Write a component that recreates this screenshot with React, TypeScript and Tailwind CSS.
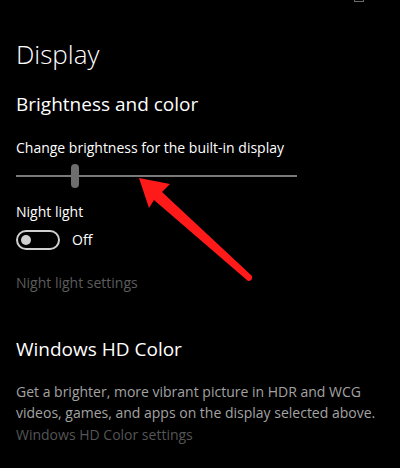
const Arrow = () => (
  <svg
    className="absolute left-0 top-0 pointer-events-none"
    width="400"
    height="468"
    viewBox="0 0 400 468"
  >
    <path
      d="M139 178 L170 184 L162 192 L252 276 Q253 281 248 281 L154 200 L149 208 Z"
      fill="#ff1a1a"
    />
  </svg>
);

const App = () => {
  return (
    <div
      className="relative w-[400px] h-[468px] overflow-hidden bg-black text-white"
      style={{ fontFamily: '"Open Sans", "Noto Sans", sans-serif' }}
    >
      <div className="absolute right-[36px] top-[-8px] h-[10px] w-[10px] border border-[#6a6a6a]" />

      <div className="px-4 pt-[36px]">
        <h1 className="text-[26px] leading-[36px] font-light">Display</h1>

        <h2 className="mt-[19px] text-[19px] leading-[26px]">Brightness and color</h2>

        <p className="mt-[21px] text-[14px] leading-[20px]">Change brightness for the built-in display</p>

        <div className="relative mt-[6px] h-[24px] w-[281px]">
          <div className="absolute left-0 right-0 top-[11px] h-[2px] bg-[#7a7a7a]" />
          <div className="absolute left-[55px] top-0 h-[24px] w-[8px] rounded-full bg-[#6e6e6e]" />
        </div>

        <p className="mt-[14px] text-[14px] leading-[20px]">Night light</p>

        <div className="mt-[8px] flex items-center gap-[12px]">
          <div className="flex h-[20px] w-[44px] items-center rounded-full border-2 border-[#cfcfcf] px-[3px]">
            <div className="h-[10px] w-[10px] rounded-full bg-[#cfcfcf]" />
          </div>
          <span className="text-[14px] leading-[20px]">Off</span>
        </div>

        <p className="mt-[23px] text-[14px] leading-[20px] text-[#5c5c5c]">Night light settings</p>

        <h2 className="mt-[43px] text-[19px] leading-[26px]">Windows HD Color</h2>

        <p className="mt-[19px] text-[14px] leading-[21px] text-[#a3a3a3]">
          Get a brighter, more vibrant picture in HDR and WCG
          <br />
          videos, games, and apps on the display selected above.
        </p>

        <p className="mt-[2px] text-[14px] leading-[20px] text-[#555555]">Windows HD Color settings</p>
      </div>

      <Arrow />
    </div>
  );
};

export default App;
